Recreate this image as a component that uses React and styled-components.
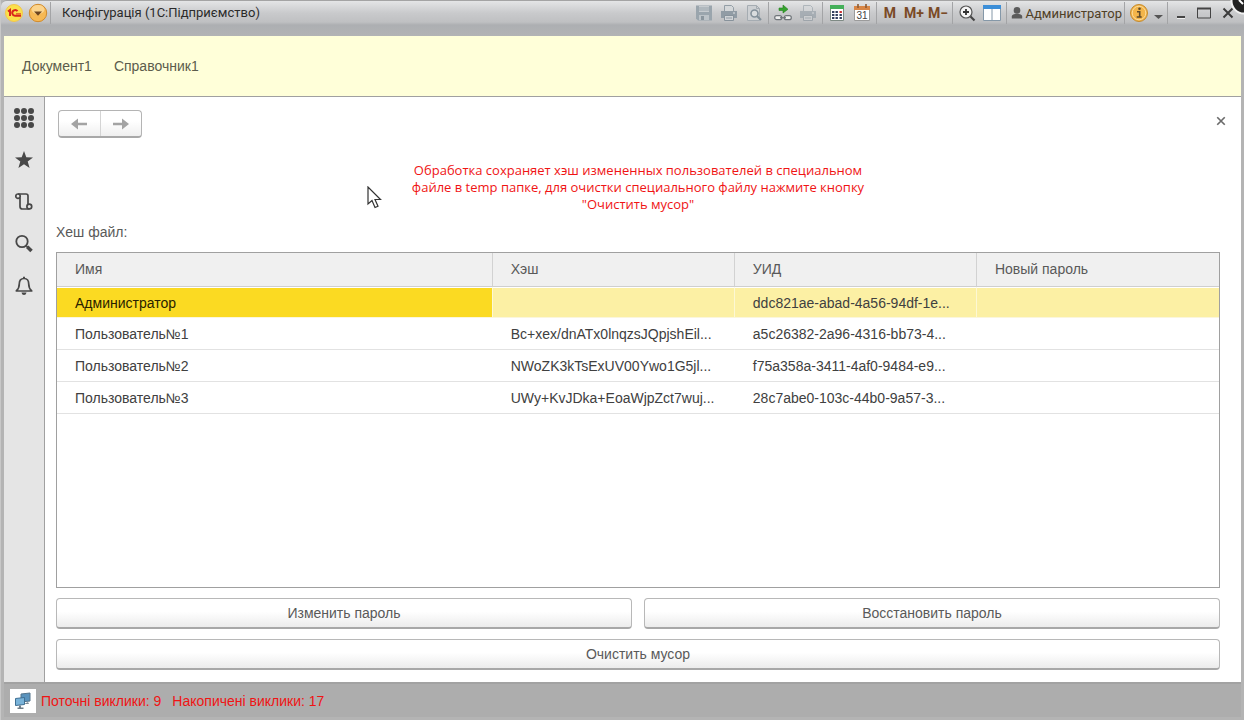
import React, { useState } from 'react';
import styled, { createGlobalStyle } from 'styled-components';

const GlobalStyle = createGlobalStyle`
  * {
    box-sizing: border-box;
  }

  body {
    margin: 0;
    font-family: "Liberation Sans", Arial, sans-serif;
    font-size: 14px;
    color: #4d4d4d;
  }

  button {
    font: inherit;
    color: inherit;
    padding: 0;
    border: 0;
    background: none;
  }

  svg {
    display: block;
    flex: none;
  }
`;

const Window = styled.div`
  display: flex;
  flex-direction: column;
  min-height: 100vh;
  padding: 0 3px 3px;
  background: #b4b4b4;
  border-left: 1px solid #c8c8c8;
`;

const TitleBar = styled.header`
  display: flex;
  align-items: flex-start;
  height: 36px;
  margin: 0 -3px;
  padding: 1px 4px 0 1px;
  background: linear-gradient(#e4e5e6 0, #c9cacc 12px, #bfc0c2 21px, #adafb2 24px, #b2b3b5 100%);
  border-top: 1px solid #a4a4a4;
  border-radius: 6px 0 0 0;
`;

const Title = styled.h1`
  flex: 1;
  margin: 0 0 0 7px;
  font-family: Roboto, sans-serif;
  font-size: 13px;
  font-weight: 400;
  line-height: 22px;
  color: #2b2b2b;
  white-space: nowrap;
`;

const ToolGroup = styled.div`
  display: flex;
  align-items: center;
  gap: ${(props) => (props.$tight ? '0' : '1px')};
  height: 22px;
  padding: ${(props) => (props.$tight ? '0' : '0 2px')};
  border-left: 1px solid ${(props) => (props.$first ? 'transparent' : '#a3a4a6')};
`;

const ToolButton = styled.button`
  display: flex;
  align-items: center;
  justify-content: center;
  width: ${(props) => (props.$narrow ? '13px' : '24px')};
  height: 22px;
`;

const MemoryButton = styled.button`
  width: 23px;
  height: 22px;
  font-family: Roboto, sans-serif;
  font-size: 14px;
  font-weight: 700;
  color: #7a4a26;
  white-space: nowrap;
`;

const UserButton = styled.button`
  display: flex;
  align-items: center;
  gap: 3px;
  height: 22px;
  padding: 0 0 0 2px;
  font-family: Roboto, sans-serif;
  font-size: 13px;
  color: #4f4026;
`;

const CornerBadge = styled.div`
  position: absolute;
  top: 0;
  right: 0;
`;

const Sections = styled.nav`
  display: flex;
  align-items: center;
  gap: 22px;
  height: 61px;
  padding: 0 18px;
  background: #ffffd9;
  border-bottom: 1px solid #a0a0a0;
`;

const SectionLink = styled.a`
  color: #5c5c4c;
  text-decoration: none;
`;

const Body = styled.div`
  display: flex;
  flex: 1;
`;

const Sidebar = styled.aside`
  display: flex;
  flex-direction: column;
  align-items: center;
  flex: none;
  width: 41px;
  background: #e5e5e5;
  border-right: 1px solid #a0a0a0;
`;

const SideButton = styled.button`
  display: flex;
  align-items: center;
  justify-content: center;
  width: 40px;
  height: 42px;
`;

const Content = styled.main`
  display: flex;
  flex-direction: column;
  gap: 10px;
  flex: 1;
  min-width: 0;
  padding: 13px 21px 12px 11px;
  background: #fff;
`;

const FormHeader = styled.div`
  display: flex;
  justify-content: space-between;
  height: 28px;
  margin-bottom: 14px;
  padding-left: 2px;
`;

const History = styled.div`
  display: flex;
  width: 84px;
  border: 1px solid #b4b4b4;
  border-bottom: 2px solid #a8a8a8;
  border-radius: 4px;
  background: linear-gradient(#fff 40%, #efefef);
`;

const HistoryButton = styled.button`
  display: flex;
  flex: 1;
  align-items: center;
  justify-content: center;

  & + & {
    border-left: 1px solid #d4d4d4;
  }
`;

const CloseButton = styled.button`
  display: flex;
  align-items: center;
  justify-content: center;
  width: 22px;
  height: 22px;
  margin-right: -12px;
`;

const Note = styled.p`
  margin: 0;
  font-family: "Open Sans", "Noto Sans", sans-serif;
  font-size: 13px;
  line-height: 17px;
  text-align: center;
  color: #f01414;
`;

const TableLabel = styled.div`
  line-height: 19px;
  color: #595959;
`;

const TableBox = styled.div`
  flex: 1;
  border: 1px solid #a0a0a0;
`;

const Table = styled.table`
  width: 100%;
  table-layout: fixed;
  border-collapse: separate;
  border-spacing: 0;
`;

const HeadCell = styled.th`
  width: ${(props) => props.$width || 'auto'};
  height: 34px;
  padding: 0 18px 2px;
  background: #f0f0f0;
  border-bottom: 1px solid #cfcfcf;
  border-right: 1px solid #d2d2d2;
  font-weight: 400;
  text-align: left;
  color: #595959;

  &:last-child {
    border-right: 0;
  }
`;

const Row = styled.tr`
  height: ${(props) => (props.$selected ? '31px' : '32px')};
  background: ${(props) => (props.$selected ? '#fcf0a4' : '#fff')};
`;

const Cell = styled.td`
  padding: 0 0 0 18px;
  overflow: hidden;
  white-space: nowrap;
  color: #404040;
  border-bottom: 1px solid #e2e2e2;

  ${Row}:first-child & {
    border-top: 1px solid #fff;
    border-bottom-color: #fbf6dc;
    border-right: 1px solid #fdf8d4;
  }

  ${Row}:first-child &:last-child {
    border-right: 0;
  }
`;

const NameCell = styled(Cell)`
  background: ${(props) => (props.$selected ? '#fbda22' : 'transparent')};
  color: ${(props) => (props.$selected ? '#2a2200' : '#404040')};
`;

const Actions = styled.div`
  display: flex;
  flex-wrap: wrap;
  gap: 10px 12px;
`;

const ActionButton = styled.button`
  flex: 1 1 ${(props) => (props.$wide ? '100%' : '40%')};
  height: 31px;
  border: 1px solid #b8b8b8;
  border-bottom: 2px solid #a8a8a8;
  border-radius: 4px;
  background: linear-gradient(#fff 45%, #ececec);
  color: #595959;
`;

const StatusBar = styled.footer`
  display: flex;
  align-items: center;
  gap: 5px;
  height: 35px;
  padding: 0 6px;
  background: #adadad;
  border-top: 2px solid #a2a2a2;
  color: #f01414;
`;

const Calls = styled.span`
  margin-right: 6px;
`;

const StatusIcon = styled.div`
  display: flex;
  align-items: center;
  justify-content: center;
  width: 26px;
  height: 24px;
  background: #fff;
`;

const Pointer = styled.div`
  position: absolute;
  left: 367px;
  top: 186px;
  pointer-events: none;
`;

const LogoIcon = () => (
  <svg width="24" height="22" viewBox="0 0 24 22">
    <circle cx="12" cy="11" r="8.5" fill="#fbe04a" stroke="#f3c64a" />
    <path d="M6 9.5l2-1.5v6" fill="none" stroke="#d9261c" strokeWidth="2" />
    <path d="M15.500 9.200a2.900 2.900 0 1 0-2 4.600H19" fill="none" stroke="#d9261c" strokeWidth="2" />
    <path d="M14 11.900h5" stroke="#d9261c" strokeWidth="1" />
  </svg>
);

const MainMenuIcon = () => (
  <svg width="22" height="22" viewBox="0 0 22 22">
    <circle cx="11" cy="11" r="8.7" fill="#f6b955" stroke="#d08a2c" />
    <ellipse cx="11" cy="7.5" rx="6.5" ry="4.5" fill="#fbd48d" />
    <path d="M7 9.5h8l-4 4.2z" fill="#6b4420" />
  </svg>
);

const SaveIcon = () => (
  <svg width="18" height="18" viewBox="0 0 18 18">
    <path d="M1 1.5h16v15H3l-2-2z" fill="#9aa5ad" />
    <path d="M4 2h10v6H4z" fill="#c6cbcf" />
    <path d="M4 4h10M4 6h10" stroke="#9aa5ad" />
    <path d="M4 11h10v5H4z" fill="#bcc3c8" />
    <path d="M6 12h3v4H6z" fill="#8b969e" />
  </svg>
);

const PrinterIcon = ({ pale }) => (
  <svg width="18" height="18" viewBox="0 0 18 18" opacity={pale ? 0.6 : 1}>
    <path d="M4.5 7V1.5h7l2 2V7" fill="#d5d8da" stroke="#939ea6" />
    <path d="M1 7h16v7H1z" fill="#919ca5" />
    <path d="M4.5 11.5h9v5h-9z" fill="#d0d3d6" stroke="#87929b" />
    <path d="M6 14h6" stroke="#919ca5" />
    <path d="M13 9h2" stroke="#e0e3e5" />
  </svg>
);

const PreviewIcon = () => (
  <svg width="18" height="18" viewBox="0 0 18 18">
    <path d="M2.5 1.5h9l3 3v12h-12z" fill="#cdd0d3" stroke="#a5acb2" />
    <path d="M11.5 1.5v3h3" fill="none" stroke="#a5acb2" />
    <circle cx="9.5" cy="9.5" r="3.5" fill="#d9dcde" stroke="#83909a" strokeWidth="1.6" />
    <path d="M12 12l4 4" stroke="#83909a" strokeWidth="2.2" />
  </svg>
);

const LinkIcon = () => (
  <svg width="20" height="18" viewBox="0 0 20 18">
    <path d="M6 4h4V1l5 4.3L10 9V6.5H6z" fill="#35a32e" stroke="#258020" strokeWidth=".6" />
    <rect x="1.7" y="11.7" width="7" height="4" rx="2" fill="#eee" stroke="#70757a" strokeWidth="1.2" />
    <rect x="11.3" y="11.7" width="7" height="4" rx="2" fill="#eee" stroke="#70757a" strokeWidth="1.2" />
    <path d="M7 13.7h6" stroke="#70757a" strokeWidth="1.2" />
  </svg>
);

const CalculatorIcon = () => (
  <svg width="18" height="18" viewBox="0 0 18 18">
    <path d="M2.5 1.5h13v15h-13z" fill="#fff" stroke="#7e8a84" />
    <path d="M2 1h14v4H2z" fill="#45b05a" />
    <path d="M4 8h2.4M7.5 8h2.4M4 11h2.4M7.5 11h2.4M11.5 11h2.4M4 14h2.4M7.5 14h2.4M11.5 14h2.4" stroke="#34405e" strokeWidth="2" />
    <path d="M11.5 8h2.4" stroke="#c33" strokeWidth="2" />
  </svg>
);

const CalendarIcon = () => (
  <svg width="18" height="20" viewBox="0 0 18 20">
    <path d="M1.5 3.5h15v14h-15z" fill="#fff" stroke="#9b9b9b" />
    <path d="M1 3h16v4H1z" fill="#d88646" />
    <path d="M5 1v4M13 1v4" stroke="#8d5a34" strokeWidth="1.6" />
    <text x="9" y="15.5" textAnchor="middle" fontSize="10" fontFamily="Liberation Sans" fill="#444">31</text>
  </svg>
);

const ZoomIcon = () => (
  <svg width="18" height="18" viewBox="0 0 18 18">
    <circle cx="8" cy="8" r="6" fill="#f5f5f5" stroke="#555" strokeWidth="1.2" />
    <path d="M5 8h6M8 5v6" stroke="#333" strokeWidth="1.8" />
    <path d="M12.5 12.5l4 4" stroke="#444" strokeWidth="2.2" />
  </svg>
);

const PanelsIcon = () => (
  <svg width="18" height="18" viewBox="0 0 18 18">
    <path d="M.5 1.5h17v15H.5z" fill="#fff" stroke="#8598a8" />
    <path d="M0 1h18v4H0z" fill="#3d8fd8" />
    <path d="M9 5v12" stroke="#8598a8" />
  </svg>
);

const UserIcon = () => (
  <svg width="12" height="14" viewBox="0 0 12 14">
    <circle cx="6" cy="4.4" r="3.3" fill="#5b5b5b" />
    <path d="M.8 12.500V10.500C.8 8.600 3 7.800 6 7.800s5.200.8 5.200 2.700v2z" fill="#5b5b5b" />
  </svg>
);

const InfoIcon = () => (
  <svg width="20" height="20" viewBox="0 0 20 20">
    <circle cx="10" cy="10" r="8.5" fill="#f3b54a" stroke="#c58a2c" />
    <circle cx="10" cy="10" r="6.8" fill="none" stroke="#fbdc9b" />
    <circle cx="10.5" cy="5.8" r="1.3" fill="#5e4a2a" />
    <path d="M8 8.7h2.7v5M7.7 14h5" fill="none" stroke="#5e4a2a" strokeWidth="1.6" />
  </svg>
);

const ArrowIcon = () => (
  <svg width="9" height="14" viewBox="0 0 9 14">
    <path d="M0 9h9l-4.500 4z" fill="#555" />
  </svg>
);

const MinimizeIcon = () => (
  <svg width="14" height="14" viewBox="0 0 14 14">
    <path d="M4 11h8" stroke="#444" strokeWidth="2" />
    <path d="M4 12.5h8" stroke="#eee" />
  </svg>
);

const MaximizeIcon = () => (
  <svg width="14" height="14" viewBox="0 0 14 14">
    <path d="M.5 2.5h13v9.5H.5z" fill="none" stroke="#444" />
    <path d="M0 2.5h14" stroke="#444" strokeWidth="2" />
  </svg>
);

const CrossIcon = ({ size, color }) => (
  <svg width={size} height={size} viewBox="0 0 12 12">
    <path d="M1.5 1.5l9 9M10.5 1.5l-9 9" stroke={color} strokeWidth="2" />
  </svg>
);

const GridIcon = () => (
  <svg width="20" height="20" viewBox="0 0 20 20" fill="#484848">
    {[3, 10, 17].map((y) => [3, 10, 17].map((x) => <circle key={`${x}-${y}`} cx={x} cy={y} r="3" />))}
  </svg>
);

const StarIcon = () => (
  <svg width="20" height="20" viewBox="0 0 20 20">
    <path d="M10 1l2.3 6.3 6.7.2-5.3 4.1 1.9 6.4L10 14.2 4.4 18l1.9-6.4L1 7.5l6.700-.2z" fill="#484848" />
  </svg>
);

const ScrollIcon = () => (
  <svg width="20" height="20" viewBox="0 0 20 20" fill="none" stroke="#484848" strokeWidth="1.7">
    <path d="M4 2h8q2 0 2 2v9" />
    <circle cx="4" cy="4.2" r="2.2" />
    <path d="M6 5.5v9q0 2.500 2.500 2.500h7" />
    <circle cx="15.3" cy="14.5" r="2.4" />
  </svg>
);

const SearchIcon = () => (
  <svg width="20" height="20" viewBox="0 0 20 20" fill="none" stroke="#484848">
    <circle cx="8" cy="7.5" r="5.7" strokeWidth="1.8" />
    <path d="M12 11.5l1.800 1.800" strokeWidth="1.5" />
    <path d="M13.2 12.7l4.300 4.300" strokeWidth="3.5" />
  </svg>
);

const BellIcon = () => (
  <svg width="20" height="20" viewBox="0 0 20 20">
    <path d="M10 2.500c-3.300 0-4.700 2.300-4.700 5.300 0 3.700-.8 5.300-3 7.200h15.400c-2.200-1.900-3-3.500-3-7.200 0-3-1.400-5.300-4.700-5.300z" fill="none" stroke="#484848" strokeWidth="1.7" strokeLinejoin="round" />
    <path d="M9 .8h2v2H9zM7.5 16.5h5c-.4 1.700-1.200 2.500-2.500 2.500s-2.100-.8-2.500-2.500z" fill="#484848" />
  </svg>
);

const HistoryArrow = ({ forward }) => (
  <svg width="16" height="12" viewBox="0 0 16 12">
    <path
      d={forward ? 'M0 4.700h9V.5L16 6l-7 5.500V7.300H0z' : 'M16 4.700H7V.5L0 6l7 5.500V7.300h9z'}
      fill="#a3a3a3"
    />
  </svg>
);

const ComputersIcon = () => (
  <svg width="18" height="18" viewBox="0 0 18 18">
    <path d="M7 2l9-1v8l-9 1z" fill="#5a93bd" stroke="#54748c" />
    <path d="M10 12h5l-1-2" fill="#7b8a95" />
    <path d="M1.5 6.5l9-1v7l-9 1z" fill="#79b3d9" stroke="#3f6f93" />
    <path d="M5 13.5v2H3.500V17h6v-1.500H7v-2z" fill="#6e7d88" />
  </svg>
);

const sections = ['Документ1', 'Справочник1'];

const users = [
  { name: 'Администратор', hash: '', uid: 'ddc821ae-abad-4a56-94df-1e...' },
  { name: 'Пользователь№1', hash: 'Bc+xex/dnATx0lnqzsJQpjshEil...', uid: 'a5c26382-2a96-4316-bb73-4...' },
  { name: 'Пользователь№2', hash: 'NWoZK3kTsExUV00Ywo1G5jl...', uid: 'f75a358a-3411-4af0-9484-e9...' },
  { name: 'Пользователь№3', hash: 'UWy+KvJDka+EoaWjpZct7wuj...', uid: '28c7abe0-103c-44b0-9a57-3...' },
];

function WindowTitle() {
  return (
    <TitleBar>
      <ToolButton aria-label="1С"><LogoIcon /></ToolButton>
      <ToolButton aria-label="Главное меню"><MainMenuIcon /></ToolButton>
      <ToolGroup />
      <Title>Конфігурація (1С:Підприємство)</Title>
      <ToolGroup $first>
        <ToolButton aria-label="Сохранить"><SaveIcon /></ToolButton>
        <ToolButton aria-label="Печать"><PrinterIcon /></ToolButton>
        <ToolButton aria-label="Просмотр"><PreviewIcon /></ToolButton>
      </ToolGroup>
      <ToolGroup>
        <ToolButton aria-label="Перейти по ссылке"><LinkIcon /></ToolButton>
        <ToolButton aria-label="Получить ссылку"><PrinterIcon pale /></ToolButton>
      </ToolGroup>
      <ToolGroup>
        <ToolButton aria-label="Калькулятор"><CalculatorIcon /></ToolButton>
        <ToolButton aria-label="Календарь"><CalendarIcon /></ToolButton>
      </ToolGroup>
      <ToolGroup>
        <MemoryButton>M</MemoryButton>
        <MemoryButton>M+</MemoryButton>
        <MemoryButton>M−</MemoryButton>
      </ToolGroup>
      <ToolGroup>
        <ToolButton aria-label="Масштаб"><ZoomIcon /></ToolButton>
        <ToolButton aria-label="Панели"><PanelsIcon /></ToolButton>
      </ToolGroup>
      <ToolGroup>
        <UserButton><UserIcon />Администратор</UserButton>
      </ToolGroup>
      <ToolGroup>
        <ToolButton aria-label="Информация"><InfoIcon /></ToolButton>
        <ToolButton $narrow aria-label="Ещё"><ArrowIcon /></ToolButton>
      </ToolGroup>
      <ToolGroup $tight>
        <ToolButton aria-label="Свернуть"><MinimizeIcon /></ToolButton>
        <ToolButton aria-label="Развернуть"><MaximizeIcon /></ToolButton>
        <ToolButton aria-label="Закрыть"><CrossIcon size={12} color="#3c3c3c" /></ToolButton>
      </ToolGroup>
    </TitleBar>
  );
}

function UsersTable() {
  const [selected, setSelected] = useState(0);

  return (
    <TableBox>
      <Table aria-labelledby="hash-file">
        <thead>
          <tr>
            <HeadCell $width="37.5%">Имя</HeadCell>
            <HeadCell>Хэш</HeadCell>
            <HeadCell>УИД</HeadCell>
            <HeadCell>Новый пароль</HeadCell>
          </tr>
        </thead>
        <tbody>
          {users.map((user, index) => (
            <Row key={user.name} $selected={index === selected} onClick={() => setSelected(index)}>
              <NameCell $selected={index === selected}>{user.name}</NameCell>
              <Cell>{user.hash}</Cell>
              <Cell>{user.uid}</Cell>
              <Cell />
            </Row>
          ))}
        </tbody>
      </Table>
    </TableBox>
  );
}

function App() {
  return (
    <>
      <GlobalStyle />
      <Window>
        <WindowTitle />
        <Sections>
          {sections.map((section) => (
            <SectionLink href="#" key={section}>{section}</SectionLink>
          ))}
        </Sections>
        <Body>
          <Sidebar>
            <SideButton aria-label="Меню"><GridIcon /></SideButton>
            <SideButton aria-label="Избранное"><StarIcon /></SideButton>
            <SideButton aria-label="История"><ScrollIcon /></SideButton>
            <SideButton aria-label="Поиск"><SearchIcon /></SideButton>
            <SideButton aria-label="Оповещения"><BellIcon /></SideButton>
          </Sidebar>
          <Content>
            <FormHeader>
              <History>
                <HistoryButton aria-label="Назад"><HistoryArrow /></HistoryButton>
                <HistoryButton aria-label="Вперед"><HistoryArrow forward /></HistoryButton>
              </History>
              <CloseButton aria-label="Закрыть форму"><CrossIcon size={10} color="#6a6a6a" /></CloseButton>
            </FormHeader>
            <Note>
              Обработка сохраняет хэш измененных пользователей в специальном<br />
              файле в temp папке, для очистки специального файлу нажмите кнопку<br />
              "Очистить мусор"
            </Note>
            <TableLabel id="hash-file">Хеш файл:</TableLabel>
            <UsersTable />
            <Actions>
              <ActionButton>Изменить пароль</ActionButton>
              <ActionButton>Восстановить пароль</ActionButton>
              <ActionButton $wide>Очистить мусор</ActionButton>
            </Actions>
          </Content>
        </Body>
        <StatusBar>
          <StatusIcon><ComputersIcon /></StatusIcon>
          <Calls>Поточні виклики: 9</Calls>
          <Calls>Накопичені виклики: 17</Calls>
        </StatusBar>
      </Window>
      <Pointer>
        <svg width="15" height="23" viewBox="0 0 15 23">
          <path d="M1 1v17l4-3.500 3 7 3-1.300-3-6.700h5.500z" fill="#fff" stroke="#333" strokeWidth="1.2" />
        </svg>
      </Pointer>
      <CornerBadge>
        <svg width="16" height="16" viewBox="0 0 16 16">
          <circle cx="16" cy="1" r="12.5" fill="#222" stroke="#f2f2f2" strokeWidth="2" />
          <path d="M11 0l4 4" stroke="#fff" strokeWidth="2" />
        </svg>
      </CornerBadge>
    </>
  );
}

export default App;
